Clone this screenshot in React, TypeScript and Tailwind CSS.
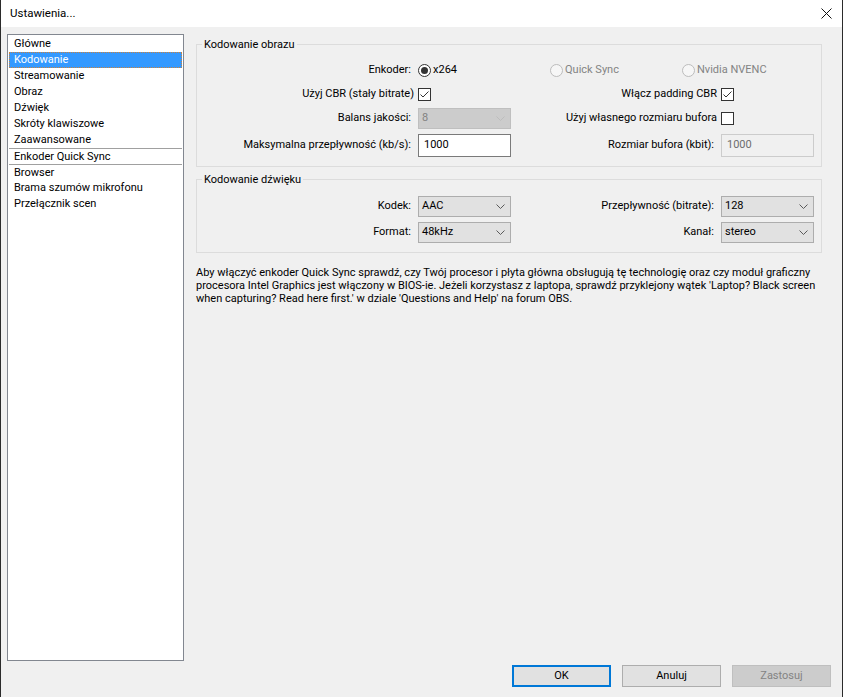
import React from 'react';

const navItems = [
  { label: 'Główne' },
  { label: 'Kodowanie', active: true },
  { label: 'Streamowanie' },
  { label: 'Obraz' },
  { label: 'Dźwięk' },
  { label: 'Skróty klawiszowe' },
  { label: 'Zaawansowane' },
  { label: 'Enkoder Quick Sync', sep: true },
  { label: 'Browser', sep: true },
  { label: 'Brama szumów mikrofonu' },
  { label: 'Przełącznik scen' },
];

const helpLines = [
  'Aby włączyć enkoder Quick Sync sprawdź, czy Twój procesor i płyta główna obsługują tę technologię oraz czy moduł graficzny',
  "procesora Intel Graphics jest włączony w BIOS-ie. Jeżeli korzystasz z laptopa, sprawdź przyklejony wątek 'Laptop? Black screen",
  "when capturing? Read here first.' w dziale 'Questions and Help' na forum OBS.",
];

function Chevron({ disabled }: { disabled?: boolean }) {
  return (
    <svg width="9" height="5" viewBox="0 0 9 5" className="shrink-0">
      <path d="M0.5 0.5 L4.5 4.5 L8.5 0.5" fill="none" stroke={disabled ? '#bdbdbd' : '#5a5a5a'} strokeWidth="1" />
    </svg>
  );
}

function Combo({ value, disabled }: { value: string; disabled?: boolean }) {
  return (
    <div
      className={
        disabled
          ? 'flex items-center justify-between w-[93px] h-[21px] border border-[#bfbfbf] bg-[#cccccc] text-[#838383] pl-[3px] pr-[5px]'
          : 'flex items-center justify-between w-[93px] h-[21px] border border-[#adadad] bg-[#e1e1e1] pl-[3px] pr-[5px]'
      }
    >
      <span>{value}</span>
      <Chevron disabled={disabled} />
    </div>
  );
}

function Field({ value, disabled }: { value: string; disabled?: boolean }) {
  return (
    <div
      className={
        disabled
          ? 'flex items-center w-[93px] h-[23px] border border-[#cccccc] bg-[#f0f0f0] text-[#6d6d6d] pl-[5px]'
          : 'flex items-center w-[93px] h-[23px] border border-[#7a7a7a] bg-white pl-[5px]'
      }
    >
      {value}
    </div>
  );
}

function Check({ checked }: { checked?: boolean }) {
  return (
    <span className="flex items-center justify-center w-[13px] h-[13px] border border-[#333333] bg-white">
      {checked && (
        <svg width="11" height="11" viewBox="0 0 11 11">
          <path d="M1.5 5.5 L4 8 L9.5 2.5" fill="none" stroke="#333333" strokeWidth="1" />
        </svg>
      )}
    </span>
  );
}

function Radio({ label, checked, disabled }: { label: string; checked?: boolean; disabled?: boolean }) {
  return (
    <div className="flex items-center gap-[2px]">
      <span
        className={
          disabled
            ? 'flex items-center justify-center w-[13px] h-[13px] rounded-full border border-[#bcbcbc] bg-[#f6f6f6]'
            : 'flex items-center justify-center w-[13px] h-[13px] rounded-full border border-[#333333] bg-white'
        }
      >
        {checked && <span className="w-[7px] h-[7px] rounded-full bg-[#333333]" />}
      </span>
      <span className={disabled ? 'text-[#838383]' : ''}>{label}</span>
    </div>
  );
}

function Group({ title, children }: { title: string; children: React.ReactNode }) {
  return (
    <div className="relative border border-[#dcdcdc]">
      <span className="absolute left-[5px] -top-[8px] px-[2px] bg-[#f0f0f0] leading-[15px]">{title}</span>
      {children}
    </div>
  );
}

const rowCls = 'grid grid-cols-[214px_93px_196px_93px] gap-x-[7px] items-center';

function Label({ children, tight }: { children: React.ReactNode; tight?: boolean }) {
  return <span className={tight ? 'text-right whitespace-nowrap -mr-[3px]' : 'text-right whitespace-nowrap'}>{children}</span>;
}

export default function App() {
  return (
    <div className="w-[846px] h-[697px] bg-white overflow-hidden font-['Roboto',sans-serif] text-[11px] text-black">
      <div className="w-[843px] h-full flex flex-col border-x border-[#2b2b2b] bg-[#f0f0f0]">
        {/* title bar */}
        <div className="h-[27px] shrink-0 bg-white flex items-center justify-between pl-[9px] pr-[10px]">
          <span className="text-[11.5px]">Ustawienia...</span>
          <svg width="11" height="11" viewBox="0 0 11 11">
            <path d="M0.5 0.5 L10.5 10.5 M10.5 0.5 L0.5 10.5" stroke="#111" strokeWidth="1" />
          </svg>
        </div>

        <div className="flex pt-[7px] pl-[6px] h-[634px]">
          {/* category list */}
          <div className="w-[177px] h-[627px] shrink-0 border border-[#828790] bg-white p-[1px]">
            {navItems.map((item) => (
              <div
                key={item.label}
                className={
                  item.active
                    ? 'h-[16px] leading-[14px] px-[4px] bg-[#3399ff] text-white border border-dotted border-[#c9823f]'
                    : item.sep
                      ? 'h-[16px] leading-[15px] px-[5px] border-t border-[#a0a0a0]'
                      : 'h-[16px] leading-[16px] px-[5px]'
                }
              >
                {item.label}
              </div>
            ))}
          </div>

          {/* settings */}
          <div className="ml-[12px] w-[626px] flex flex-col">
            <div className="mt-[10px]">
              <Group title="Kodowanie obrazu">
                <div className="flex flex-col pt-[17px] pb-[9px]">
                  <div className={`${rowCls} h-[13px]`}>
                    <Label>Enkoder:</Label>
                    <div className="col-span-3 grid grid-cols-3">
                      <Radio label="x264" checked />
                      <Radio label="Quick Sync" disabled />
                      <Radio label="Nvidia NVENC" disabled />
                    </div>
                  </div>
                  <div className={`${rowCls} h-[13px] mt-[11px]`}>
                    <Label tight>Użyj CBR (stały bitrate)</Label>
                    <Check checked />
                    <Label tight>Włącz padding CBR</Label>
                    <Check checked />
                  </div>
                  <div className={`${rowCls} h-[21px] mt-[9px]`}>
                    <Label>Balans jakości:</Label>
                    <Combo value="8" disabled />
                    <Label tight>Użyj własnego rozmiaru bufora</Label>
                    <Check />
                  </div>
                  <div className={`${rowCls} h-[23px] mt-[5px]`}>
                    <Label>Maksymalna przepływność (kb/s):</Label>
                    <Field value="1000" />
                    <Label>Rozmiar bufora (kbit):</Label>
                    <Field value="1000" disabled />
                  </div>
                </div>
              </Group>
            </div>

            <div className="mt-[12px]">
              <Group title="Kodowanie dźwięku">
                <div className="flex flex-col pt-[16px] pb-[9px]">
                  <div className={`${rowCls} h-[21px]`}>
                    <Label>Kodek:</Label>
                    <Combo value="AAC" />
                    <Label>Przepływność (bitrate):</Label>
                    <Combo value="128" />
                  </div>
                  <div className={`${rowCls} h-[21px] mt-[5px]`}>
                    <Label>Format:</Label>
                    <Combo value="48kHz" />
                    <Label>Kanał:</Label>
                    <Combo value="stereo" />
                  </div>
                </div>
              </Group>
            </div>

            <div className="mt-[13px] leading-[13px]">
              {helpLines.map((line) => (
                <div key={line} className="whitespace-nowrap">
                  {line}
                </div>
              ))}
            </div>
          </div>
        </div>

        {/* dialog buttons */}
        <div className="flex justify-end gap-[11px] pr-[11px] mt-[4px]">
          <button className="w-[99px] h-[22px] border-2 border-[#0078d7] bg-[#e1e1e1]">OK</button>
          <button className="w-[99px] h-[22px] border border-[#adadad] bg-[#e1e1e1]">Anuluj</button>
          <button className="w-[99px] h-[22px] border border-[#bfbfbf] bg-[#cccccc] text-[#838383]">Zastosuj</button>
        </div>
      </div>
    </div>
  );
}
